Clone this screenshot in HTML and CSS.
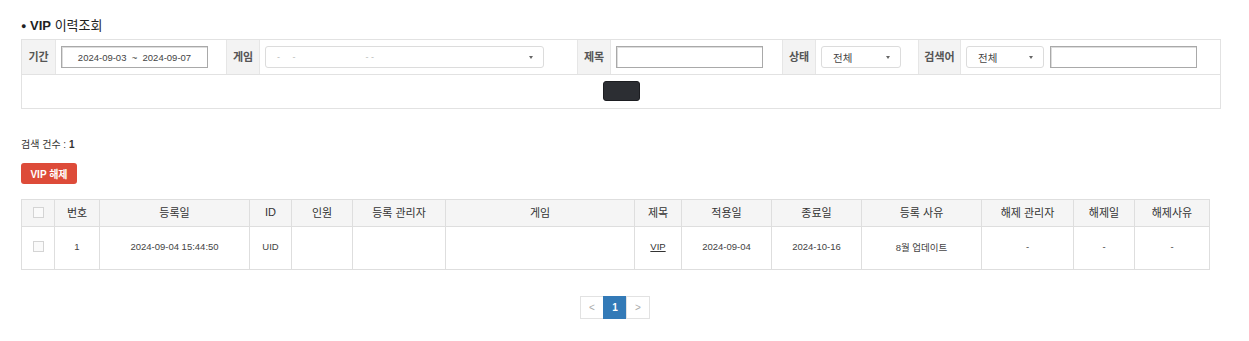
FILE: index.html
```html
<!DOCTYPE html>
<html lang="ko">
<head>
<meta charset="utf-8">
<title>VIP 이력조회</title>
<link rel="stylesheet" href="styles.css">
</head>
<body>
<div class="page">
  <h2 class="title"><span class="dot">●</span> <b>VIP</b> 이력조회</h2>

  <div class="search">
    <div class="srow">
      <div class="lbl w34">기간</div>
      <div class="fld f1"><div class="inp date">2024-09-03 &nbsp;~&nbsp; 2024-09-07</div></div>
      <div class="lbl w34">게임</div>
      <div class="fld f2"><div class="sel game"><span class="blur">-&nbsp;&nbsp;&nbsp;&nbsp;&nbsp;-&nbsp;&nbsp;&nbsp;&nbsp;&nbsp;&nbsp;&nbsp;&nbsp;&nbsp;&nbsp;&nbsp;&nbsp;&nbsp;&nbsp;&nbsp;&nbsp;&nbsp;&nbsp;&nbsp;&nbsp;&nbsp;&nbsp;&nbsp;&nbsp;&nbsp;&nbsp;&nbsp;&nbsp;- -</span><i class="caret"></i></div></div>
      <div class="lbl w34">제목</div>
      <div class="fld f3"><div class="inp text"></div></div>
      <div class="lbl w34">상태</div>
      <div class="fld f4"><div class="sel small">전체<i class="caret"></i></div></div>
      <div class="lbl w43">검색어</div>
      <div class="fld f5"><div class="sel small2">전체<i class="caret"></i></div><div class="inp text2"></div></div>
    </div>
    <div class="srow2"><button class="btn-dark" type="button"></button></div>
  </div>

  <p class="count">검색 건수 : <b>1</b></p>
  <button class="btn-red" type="button">VIP 해제</button>

  <table class="grid">
    <colgroup>
      <col style="width:33px"><col style="width:45px"><col style="width:150px"><col style="width:42px"><col style="width:61px"><col style="width:93px"><col style="width:189px"><col style="width:47px"><col style="width:90px"><col style="width:90px"><col style="width:120px"><col style="width:92px"><col style="width:61px"><col style="width:75px">
    </colgroup>
    <thead>
      <tr>
        <th><span class="chk"></span></th><th>번호</th><th>등록일</th><th>ID</th><th>인원</th><th>등록 관리자</th><th>게임</th><th>제목</th><th>적용일</th><th>종료일</th><th>등록 사유</th><th>해제 관리자</th><th>해제일</th><th>해제사유</th>
      </tr>
    </thead>
    <tbody>
      <tr>
        <td><span class="chk"></span></td><td>1</td><td>2024-09-04 15:44:50</td><td>UID</td><td></td><td></td><td></td><td><a class="lnk" href="#">VIP</a></td><td>2024-09-04</td><td>2024-10-16</td><td>8월 업데이트</td><td>-</td><td>-</td><td>-</td>
      </tr>
    </tbody>
  </table>

  <div class="pager">
    <span class="pg">&lt;</span><span class="pg on">1</span><span class="pg">&gt;</span>
  </div>
</div>
</body>
</html>
```

FILE: styles.css
```css
* { box-sizing: border-box; }
html, body { margin: 0; padding: 0; background: #fff; }
body {
  font-family: "Liberation Sans", "Noto Sans CJK KR", sans-serif;
  color: #333;
}
.page { padding: 18px 0 0 21px; width: 1221px; }

.title {
  margin: 0 0 5px 0;
  font-size: 13px;
  line-height: 16px;
  font-weight: normal;
  color: #222;
}
.title b { font-weight: bold; }
.title .dot { font-size: 9px; vertical-align: 1px; }

.search {
  width: 1200px;
  border: 1px solid #e2e2e2;
}
.srow {
  display: flex;
  height: 35px;
  border-bottom: 1px solid #e2e2e2;
}
.lbl {
  background: #f3f3f3;
  border-left: 1px solid #e6e6e6;
  border-right: 1px solid #e6e6e6;
  font-size: 11px;
  color: #555;
  font-weight: bold;
  display: flex;
  align-items: center;
  justify-content: center;
  padding-bottom: 3px;
}
.srow .lbl:first-child { border-left: 0; }
.w34 { width: 34px; }
.w43 { width: 43px; }
.fld {
  display: flex;
  align-items: center;
  padding-left: 5px;
  gap: 6px;
}
.f1 { width: 170px; }
.f2 { width: 317px; }
.f3 { width: 171px; }
.f4 { width: 102px; }
.f5 { flex: 1; }

.inp {
  height: 22px;
  border: 1px solid #a9a9a9;
  box-shadow: inset 1px 1px 0 #ddd;
  background: #fff;
  font-size: 9.5px;
  color: #444;
  display: flex;
  align-items: center;
}
.date { width: 147px; justify-content: center; }
.text { width: 147px; }
.text2 { width: 147px; }

.sel {
  position: relative;
  height: 22px;
  border: 1px solid #dcdcdc;
  border-radius: 3px;
  background: #fff;
  font-size: 10.5px;
  color: #444;
  display: flex;
  align-items: center;
  padding-left: 11px;
}
.game { width: 279px; }
.small { width: 80px; }
.small2 { width: 78px; }
.blur { color: #bbb; font-size: 9px; }
.caret {
  position: absolute;
  right: 10px;
  top: 9px;
  width: 0; height: 0;
  border-left: 2.5px solid transparent;
  border-right: 2.5px solid transparent;
  border-top: 3px solid #666;
}

.srow2 {
  height: 33px;
  display: flex;
  align-items: center;
  justify-content: center;
  padding-bottom: 1px;
}
.btn-dark {
  width: 37px;
  height: 20px;
  border: 1px solid #1c1d21;
  border-radius: 3px;
  background: #2c2e33;
  padding: 0;
}

.count {
  margin: 29px 0 0 0;
  font-size: 10px;
  line-height: 14px;
  color: #333;
}
.btn-red {
  display: block;
  margin-top: 11px;
  width: 56px;
  height: 21px;
  border: 0;
  border-radius: 3px;
  background: #dd4b39;
  color: #fff;
  font-family: inherit;
  font-size: 10px;
  font-weight: bold;
  padding: 0 0 1px 0;
}

.grid {
  margin-top: 15px;
  width: 1189px;
  border-collapse: collapse;
  table-layout: fixed;
}
.grid th, .grid td {
  border: 1px solid #dedede;
  text-align: center;
  padding: 0;
  font-weight: normal;
}
.grid th {
  height: 27px;
  background: #f5f5f5;
  font-size: 11px;
  color: #333;
  padding-bottom: 2px;
}
.grid td {
  height: 43px;
  font-size: 9.5px;
  color: #444;
  padding-bottom: 3px;
}
.chk {
  display: inline-block;
  width: 11px;
  height: 11px;
  border: 1px solid #d4d4d4;
  background: #fafafa;
  vertical-align: middle;
}
.lnk { color: #333; text-decoration: underline; }

.pager {
  margin-top: 26px;
  display: flex;
  justify-content: center;
  width: 1189px;
}
.pg {
  width: 24px;
  height: 23px;
  border: 1px solid #e2e2e2;
  margin-left: -1px;
  display: flex;
  align-items: center;
  justify-content: center;
  font-size: 10px;
  color: #aaa;
  background: #fff;
}
.pg.on {
  background: #337ab7;
  border-color: #337ab7;
  color: #fff;
  font-weight: bold;
}
```
